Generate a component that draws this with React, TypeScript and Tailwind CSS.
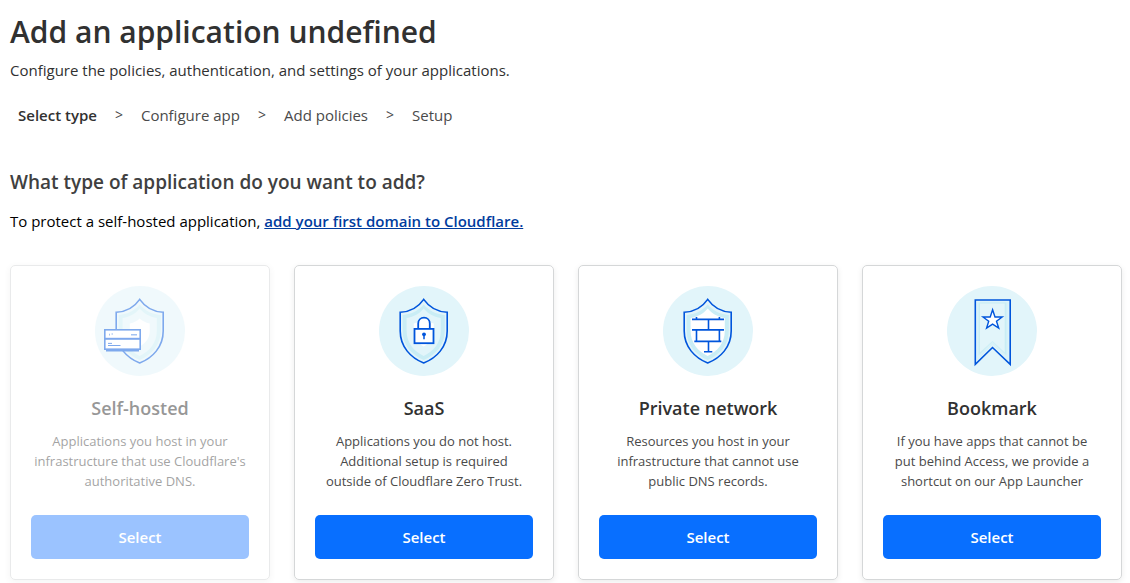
import type { ReactNode } from 'react';
import { clsx } from 'clsx';

const SHIELD =
  'M44.7 13.4C39.5 21 32 25.9 21.2 26.2V45C21.2 61 32 72 44.7 77C57.5 72 68.2 61 68.2 45V26.2C57.5 25.9 50 21 44.7 13.4Z';
const SHIELD_BAND =
  'M44.7 18.5C39.5 24.5 33 28.2 23.6 29V45C23.6 59 33 69 44.7 74C56.4 69 65.8 59 65.8 45V29C56.4 28.2 50 24.5 44.7 18.5Z';
const SHIELD_INNER =
  'M44.7 22.5C40.5 27.5 35 31 27.6 32V45C27.6 56.5 35 65.5 44.7 70C54.5 65.5 61.8 56.5 61.8 45V32C54.5 31 49 27.5 44.7 22.5Z';
const SHIELD_CORE =
  'M44.7 32.5C42 35 39 36.6 34.8 37.4V45C34.8 52 39 57.5 44.7 60.5C50.5 57.5 54.8 52 54.8 45V37.4C50.5 36.6 47.5 35 44.7 32.5Z';

function Badge({ children }: { children: ReactNode }) {
  return (
    <svg viewBox="0 0 90 90" className="size-[90px]" fill="none" stroke="none" aria-hidden="true">
      <circle cx="45" cy="45" r="45" fill="#e2f5fa" />
      {children}
    </svg>
  );
}

function SelfHostedIcon() {
  return (
    <Badge>
      <path d={SHIELD_BAND} fill="#c9edf5" />
      <path d={SHIELD_INNER} fill="#e2f5fa" />
      <path d={SHIELD_CORE} fill="#fff" />
      <path d={SHIELD} stroke="#0055dc" strokeWidth="1.6" />
      <path d="M11 64.4H44" stroke="#0055dc" strokeWidth="2" />
      <rect x="9.8" y="43.8" width="35.4" height="8.8" fill="#fff" stroke="#0055dc" strokeWidth="1.6" />
      <rect x="9.8" y="53" width="35.4" height="10.2" fill="#fff" stroke="#0055dc" strokeWidth="1.6" />
      <path d="M14 48.6h1M16.6 48h1.2M36 48.8h6" stroke="#0055dc" strokeWidth="1.6" opacity=".7" />
      <path d="M13 57.4h4M13 59.5h12.5" stroke="#0055dc" strokeWidth="1" />
    </Badge>
  );
}

function SaasIcon() {
  return (
    <Badge>
      <path d={SHIELD_BAND} fill="#c9edf5" />
      <path d={SHIELD_INNER} fill="#e2f5fa" />
      <path d={SHIELD_CORE} fill="#fff" />
      <path d={SHIELD} stroke="#0055dc" strokeWidth="1.6" />
      <path
        d="M39.2 42.6V37.5C39.2 34 41.7 31.7 45 31.7S50.8 34 50.8 37.5V42.6"
        fill="#fff"
        stroke="#0055dc"
        strokeWidth="1.8"
      />
      <rect x="35.5" y="42.9" width="19" height="14.3" fill="#fff" stroke="#0055dc" strokeWidth="1.8" />
      <circle cx="45" cy="48.3" r="1.9" fill="#0055dc" />
      <path d="M45 48.5V53.2" stroke="#0055dc" strokeWidth="1.5" />
    </Badge>
  );
}

function PrivateNetworkIcon() {
  return (
    <Badge>
      <path d={SHIELD_BAND} fill="#c9edf5" />
      <path d={SHIELD_INNER} fill="#fff" />
      <path d={SHIELD} stroke="#0055dc" strokeWidth="1.6" />
      <path
        d="M29 33.4H61M29 43.9H61M31.3 55.4H58.3M41 65.7H49.3M33.5 31V33M56.4 31V33M45.5 33.3V43.9M33.5 43.9V55.3M56.4 43.9V55.3M45.5 55.3V65.8"
        stroke="#0055dc"
        strokeWidth="1.6"
      />
    </Badge>
  );
}

function BookmarkIcon() {
  return (
    <Badge>
      <path d="M30 15.7H61.4V74.5L45.5 58.5L30 74.5Z" fill="#d8f2f8" />
      <path d="M31.5 16.5H59.5V69.5L45.5 55.5L31.5 69.5Z" fill="#c9edf5" />
      <path d="M33 17.5H57.7V66.5L45.5 55L33 66.5Z" fill="#e2f5fa" />
      <path d="M28.3 14H63.2V78.3L45.5 61.5L28.3 78.3Z" stroke="#0055dc" strokeWidth="1.6" />
      <path
        d="M45.6 23.8L48 31H55.2L49.5 35.3L51.7 42L45.6 38.1L39.6 42L41.7 35.3L36 31H43.2Z"
        fill="#fff"
        stroke="#0055dc"
        strokeWidth="1.4"
      />
    </Badge>
  );
}

const steps = ['Select type', 'Configure app', 'Add policies', 'Setup'];

const appTypes = [
  {
    name: 'Self-hosted',
    icon: <SelfHostedIcon />,
    text: ['Applications you host in your', "infrastructure that use Cloudflare's", 'authoritative DNS.'],
    disabled: true,
  },
  {
    name: 'SaaS',
    icon: <SaasIcon />,
    text: ['Applications you do not host.', 'Additional setup is required', 'outside of Cloudflare Zero Trust.'],
    disabled: false,
  },
  {
    name: 'Private network',
    icon: <PrivateNetworkIcon />,
    text: ['Resources you host in your', 'infrastructure that cannot use', 'public DNS records.'],
    disabled: false,
  },
  {
    name: 'Bookmark',
    icon: <BookmarkIcon />,
    text: ['If you have apps that cannot be', 'put behind Access, we provide a', 'shortcut on our App Launcher'],
    disabled: false,
  },
];

export default function App() {
  return (
    <main className="bg-white pt-3 pr-2 pb-1 pl-2.5 font-['Open_Sans','Noto_Sans',sans-serif] text-[15px] leading-5 text-[#313131]">
      <h1 className="text-3xl leading-10 font-semibold">Add an application undefined</h1>
      <p className="mt-2">Configure the policies, authentication, and settings of your applications.</p>

      <nav aria-label="Progress" className="mt-[25px] pl-2">
        <ol className="flex items-center">
          {steps.map((step, i) => (
            <li key={step} className="flex items-center text-[#4a4a4a]">
              {i > 0 && (
                <span aria-hidden="true" className="px-[18px] text-sm">
                  &gt;
                </span>
              )}
              <span
                aria-current={i === 0 ? 'step' : undefined}
                className={clsx(i === 0 && 'font-semibold text-[#313131]')}
              >
                {step}
              </span>
            </li>
          ))}
        </ol>
      </nav>

      <h2 className="mt-[43px] text-[19px] leading-7 font-semibold text-[#404040]">
        What type of application do you want to add?
      </h2>
      <p className="mt-[15px] text-black">
        To protect a self-hosted application,{' '}
        <a href="#add-domain" className="font-semibold text-[#003c9e] underline">
          add your first domain to Cloudflare.
        </a>
      </p>

      <section className="mt-[34px] grid grid-cols-4 gap-6">
        {appTypes.map((type) => (
          <article
            key={type.name}
            className={clsx(
              'flex flex-col items-center rounded-[5px] border border-[#d5d7d8] p-5 text-center shadow-[0_2px_6px_rgba(0,0,0,0.08)]',
              type.disabled && 'opacity-50',
            )}
          >
            {type.icon}
            <h3 className="mt-5 text-lg leading-[25px] font-semibold">{type.name}</h3>
            <p className="mt-2.5 text-[13px] leading-5 whitespace-nowrap text-[#4a4a4a]">
              {type.text.map((line) => (
                <span key={line} className="block">
                  {line}
                </span>
              ))}
            </p>
            <button
              type="button"
              disabled={type.disabled}
              aria-label={`Select ${type.name}`}
              className="mt-6 h-11 w-full rounded-[5px] bg-[#086fff] font-semibold text-white disabled:bg-[#3989ff]"
            >
              Select
            </button>
          </article>
        ))}
      </section>
    </main>
  );
}
